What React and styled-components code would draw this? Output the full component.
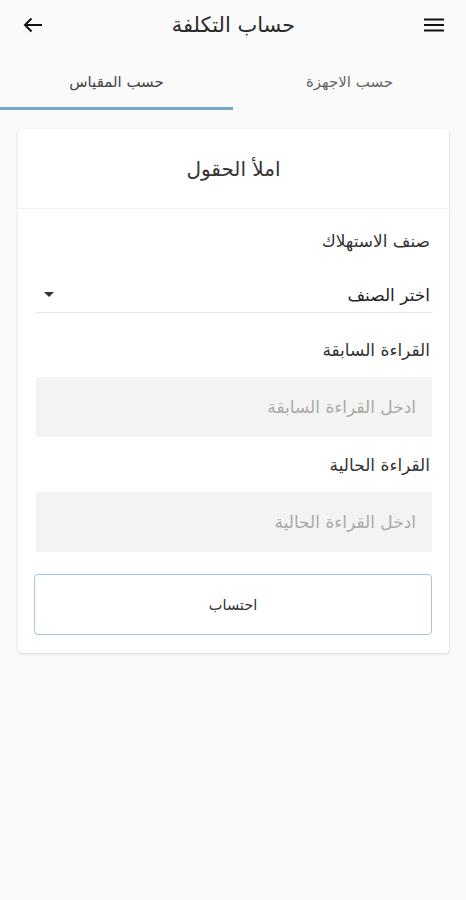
import styled, { createGlobalStyle } from "styled-components";

const GlobalStyle = createGlobalStyle`
  body {
    margin: 0;
    background: #fafafa;
    font-family: "DejaVu Sans", "Noto Sans", sans-serif;
    direction: rtl;
  }
`;

const Page = styled.div`
  width: 466px;
  min-height: 900px;
  background: #fafafa;
`;

const AppBar = styled.header`
  height: 50px;
  display: flex;
  align-items: center;
  justify-content: space-between;
  padding: 0 22px 0 23px;
`;

const IconButton = styled.button`
  border: 0;
  background: none;
  padding: 0;
  width: 20px;
  height: 20px;
  display: flex;
  align-items: center;
  justify-content: center;
  color: #1a1a1a;
`;

const Title = styled.h1`
  margin: 0;
  font-size: 21px;
  font-weight: 400;
  color: #2a2a2a;
`;

const Tabs = styled.nav`
  display: grid;
  grid-template-columns: 1fr 1fr;
  height: 60px;
`;

const Tab = styled.div`
  display: flex;
  align-items: center;
  justify-content: center;
  font-size: 15px;
  color: ${(p) => (p.$active ? "#444" : "#666")};
  border-bottom: 3px solid ${(p) => (p.$active ? "#72a9cc" : "transparent")};
  padding-top: 6px;
`;

const Card = styled.section`
  margin: 19px 17px 0 18px;
  background: #fff;
  border-radius: 4px;
  box-shadow: 0 1px 3px rgba(0, 0, 0, 0.16);
  padding-bottom: 18px;
`;

const CardHeader = styled.div`
  height: 79px;
  display: flex;
  align-items: center;
  justify-content: center;
  font-size: 20px;
  color: #333;
  border-bottom: 1px solid #f2f2f2;
`;

const CardBody = styled.div`
  padding: 0 17px 0 18px;
  display: flex;
  flex-direction: column;
`;

const Label = styled.div`
  font-size: 17px;
  line-height: 24px;
  color: #333;
  padding-right: 2px;
  margin-top: ${(p) => p.$top}px;
`;

const Select = styled.div`
  box-sizing: border-box;
  margin-top: 26px;
  height: 34px;
  display: flex;
  align-items: center;
  justify-content: space-between;
  border-bottom: 1px solid #e6e6e6;
  font-size: 17px;
  color: #222;
  padding: 0 2px 2px 8px;
`;

const Caret = styled.span`
  width: 0;
  height: 0;
  border-left: 5px solid transparent;
  border-right: 5px solid transparent;
  border-top: 5px solid #333;
`;

const Input = styled.input`
  margin-top: 15px;
  height: 60px;
  border: 0;
  border-radius: 2px;
  background: #f3f3f3;
  padding: 0 16px;
  font-family: inherit;
  font-size: 17px;
  direction: rtl;
  outline: none;
  box-sizing: border-box;
  width: 100%;
  &::placeholder {
    color: #aaa;
  }
`;

const Button = styled.button`
  margin: 22px 0 0 -2px;
  height: 61px;
  border: 1.5px solid #a9c3da;
  border-radius: 4px;
  background: #fff;
  font-family: inherit;
  font-size: 14.5px;
  color: #333;
`;

const ArrowIcon = () => (
  <svg width="20" height="16" viewBox="0 0 20 16" fill="none" stroke="#111" strokeWidth="2">
    <path d="M19 8H2M8.5 1.5L2 8l6.5 6.5" />
  </svg>
);

const MenuIcon = () => (
  <svg width="20" height="14" viewBox="0 0 20 14" fill="#111">
    <rect x="0" y="0.5" width="20" height="2" />
    <rect x="0" y="6" width="20" height="2" />
    <rect x="0" y="11.5" width="20" height="2" />
  </svg>
);

export default function App() {
  return (
    <Page>
      <GlobalStyle />
      <AppBar>
        <IconButton aria-label="menu">
          <MenuIcon />
        </IconButton>
        <Title>حساب التكلفة</Title>
        <IconButton aria-label="back">
          <ArrowIcon />
        </IconButton>
      </AppBar>
      <Tabs>
        <Tab>حسب الاجهزة</Tab>
        <Tab $active>حسب المقياس</Tab>
      </Tabs>
      <Card>
        <CardHeader>املأ الحقول</CardHeader>
        <CardBody>
          <Label $top={20}>صنف الاستهلاك</Label>
          <Select>
            <span>اختر الصنف</span>
            <Caret />
          </Select>
          <Label $top={25}>القراءة السابقة</Label>
          <Input placeholder="ادخل القراءة السابقة" />
          <Label $top={16}>القراءة الحالية</Label>
          <Input placeholder="ادخل القراءة الحالية" />
          <Button>احتساب</Button>
        </CardBody>
      </Card>
    </Page>
  );
}
